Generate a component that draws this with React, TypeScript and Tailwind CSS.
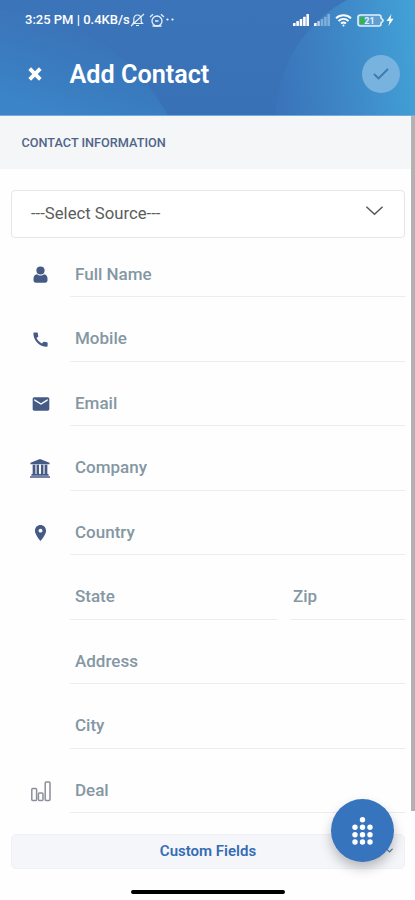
import React from 'react';
import { ChevronDown } from 'lucide-react';
import { MdCall, MdEmail, MdLocationOn } from 'react-icons/md';

interface Field {
    label: string;
    icon?: React.ReactNode;
    second?: string;
}

const FIELDS: Field[] = [
    { label: 'Full Name', icon: <PersonIcon /> },
    { label: 'Mobile', icon: <MdCall size={19} /> },
    { label: 'Email', icon: <MdEmail size={20} /> },
    { label: 'Company', icon: <BankIcon /> },
    { label: 'Country', icon: <MdLocationOn size={19} className="-translate-y-[0.5px]" /> },
    { label: 'State', second: 'Zip' },
    { label: 'Address' },
    { label: 'City' },
    { label: 'Deal', icon: <BarsIcon /> },
];

const DOTS = [
    [11, 3.8],
    [3.5, 11.3], [11, 11.3], [18.5, 11.3],
    [3.5, 18.7], [11, 18.7], [18.5, 18.7],
    [3.5, 26], [11, 26], [18.5, 26],
];

function PersonIcon() {
    return (
        <svg width="15" height="18" viewBox="0 0 15 18" fill="currentColor">
            <path d="M4 8.2C1.6 8.6.5 10.3.5 12.6v1.7c0 1.6.9 2.5 2.5 2.5h9c1.6 0 2.5-.9 2.5-2.5v-1.7c0-2.3-1.1-4-3.5-4.4-.9.9-2 1.4-3.5 1.4S4.9 9.1 4 8.2z" />
            <circle cx="7.5" cy="4.5" r="4.1" />
        </svg>
    );
}

function BankIcon() {
    return (
        <svg className="-translate-x-[0.5px] -translate-y-[0.5px]" width="21" height="20" viewBox="0 0 22 20" fill="currentColor">
            <path d="M11 0 21 4v1.6H1V4zM3.3 6h2.9v9.8H3.3zM7.4 6H10v9.8H7.400zM12 6h2.600v9.800H12zM15.800 6h2.900v9.800h-2.900zM2 15.800h18v1.700H2zM.5 18.200h21v1.600H.5z" />
        </svg>
    );
}

function BarsIcon() {
    return (
        <svg width="20" height="21" viewBox="0 0 20 21" fill="none" stroke="#8a8f9b" strokeWidth="1.5">
            <rect x=".8" y="7.6" width="4.8" height="12" rx="1" />
            <rect x="7.4" y="12" width="4.6" height="7.6" rx="1" />
            <rect x="14.2" y="1" width="4.8" height="18.6" rx="1" />
        </svg>
    );
}

function SignalBars({ faded }: { faded?: boolean }) {
    return (
        <svg width="16" height="12" viewBox="0 0 16 12" fill="#fff">
            <rect x="0" y="9" width="2.6" height="3" rx=".5" />
            <rect x="3.3" y="7" width="2.6" height="5" rx=".5" opacity={faded ? 0.6 : 1} />
            <rect x="6.7" y="5" width="2.6" height="7" rx=".5" opacity={faded ? 0.35 : 1} />
            <rect x="10.1" y="2.7" width="2.6" height="9.3" rx=".5" opacity={faded ? 0.35 : 1} />
            <rect x="13.4" y="0" width="2.6" height="12" rx=".5" opacity={faded ? 0.35 : 1} />
        </svg>
    );
}

function HeaderBackdrop() {
    return (
        <svg className="absolute inset-0" width="415" height="116" viewBox="0 0 415 116">
            <defs>
                <linearGradient id="base" x1="0" y1="0" x2="0" y2="1">
                    <stop offset="0" stopColor="#3c74b9" />
                    <stop offset="1" stopColor="#3871b6" />
                </linearGradient>
                <linearGradient id="left" x1="95" y1="28" x2="65" y2="116" gradientUnits="userSpaceOnUse">
                    <stop offset="0" stopColor="#3b80c4" stopOpacity="0" />
                    <stop offset="1" stopColor="#3b84c7" />
                </linearGradient>
                <linearGradient id="right" x1="278" y1="80" x2="415" y2="65" gradientUnits="userSpaceOnUse">
                    <stop offset="0" stopColor="#3a74ba" />
                    <stop offset=".6" stopColor="#3f8cca" />
                    <stop offset="1" stopColor="#42a0d6" />
                </linearGradient>
            </defs>
            <rect width="415" height="116" fill="url(#base)" />
            <path d="M0 10C75 18 136 54 168 116H0z" fill="url(#left)" />
            <path d="M347 0C306 22 276 66 276 116h139V0z" fill="url(#right)" />
            <path d="M0 115.500h415" stroke="#74abd9" />
        </svg>
    );
}

function StatusBar() {
    return (
        <div className="flex h-[40px] items-center pl-[25px] pr-[21px]">
            <span className="w-[103px] whitespace-nowrap text-[13px] font-medium">3:25 PM | 0.4KB/s</span>
            <svg className="ml-[2px]" width="15" height="14" viewBox="0 0 15 14" fill="none" stroke="#e6f0fa" strokeWidth="1.2">
                <path d="M3 10.5h9.5L11.2 9V5.8c0-2.2-1.5-3.8-3.7-3.8S3.8 3.6 3.8 5.8V9zM6 12.5h3M1 13 14 1" />
            </svg>
            <svg className="ml-[4px]" width="16" height="15" viewBox="0 0 16 15" fill="none" stroke="#e6f0fa" strokeWidth="1.3">
                <circle cx="8" cy="8" r="5" />
                <path d="M1 4 4 1.3M12 1.3 15 4M6 8h3.5M3.5 13h9" />
            </svg>
            <svg className="-translate-y-[1px]" width="11" height="4" viewBox="0 0 11 4" fill="#fff">
                <circle cx="2.5" cy="2.5" r="1.1" />
                <circle cx="7.5" cy="2.5" r="1.1" />
            </svg>
            <div className="ml-auto flex items-center">
                <SignalBars />
                <div className="ml-[5px] flex"><SignalBars faded /></div>
                <svg className="ml-[5px]" width="17" height="13" viewBox="0 0 17 13" fill="none" stroke="#fff" strokeWidth="1.9">
                    <path d="M1 4.3c4.3-4 10.7-4 15 0M3.5 7c2.9-2.6 7.1-2.6 10 0M6 9.5c1.5-1.3 3.5-1.3 5 0" />
                    <circle cx="8.5" cy="11.6" r="1" fill="#fff" stroke="none" />
                </svg>
                <svg className="ml-[5px]" width="28" height="13" viewBox="0 0 28 13">
                    <path d="M3.5 1h18.5q2 0 2 2v1l2 2v1l-2 2v1q0 2-2 2H3.5Q1 12 1 9.5v-6Q1 1 3.5 1z" fill="#5e9ed3" stroke="#e3f2fa" strokeWidth="1.6" />
                    <path d="M3 3h5v7H3z" fill="#35b34c" />
                    <text x="12.5" y="9.8" textAnchor="middle" fill="#e3f2fa" fontSize="9" fontWeight="700" fontFamily="Roboto, sans-serif">21</text>
                </svg>
                <svg className="ml-[1px]" width="8" height="12" viewBox="0 0 8 12" fill="#fff">
                    <path d="M5.5 0 .5 7H3.5L2.5 12 7.5 4.8H4.5z" />
                </svg>
            </div>
        </div>
    );
}

export default function App() {
    return (
        <div className="relative flex h-[900px] w-[415px] flex-col overflow-hidden bg-[#fefefe] font-[Roboto,sans-serif]">
            {/* Header */}
            <header className="relative h-[116px] shrink-0 text-white">
                <HeaderBackdrop />
                <div className="relative">
                    <StatusBar />
                    <div className="flex h-[68px] items-center pl-[28px] pr-[15px]">
                        <svg width="14" height="14" viewBox="0 0 14 14" stroke="#fff" strokeWidth="3.8">
                            <path d="M1.7 1.7 12.3 12.3M12.3 1.7 1.7 12.3" />
                        </svg>
                        <h1 className="ml-[27.5px] mt-[2px] text-[25.2px] font-semibold leading-none">Add Contact</h1>
                        <button className="ml-auto flex size-[38px] items-center justify-center rounded-full bg-[#78b2df]">
                            <svg width="18" height="14" viewBox="0 0 18 14" fill="none" stroke="#4079b0" strokeWidth="1.9">
                                <path d="M2 7 6.5 11.5 16 2" />
                            </svg>
                        </button>
                    </div>
                </div>
            </header>

            <div className="flex h-[53px] shrink-0 items-center bg-[#f4f6f8] pl-[21.5px]">
                <h2 className="text-[12.7px] font-medium text-[#506588]">CONTACT INFORMATION</h2>
            </div>

            {/* Source select */}
            <div className="ml-[11px] mt-[21px] flex h-[48px] w-[394px] shrink-0 items-center justify-between rounded-[4px] border-[1.5px] border-[#e6e6e6] bg-white pl-[19px] pr-[20px]">
                <span className="text-[16.7px] leading-none text-[#5c5c5c]">---Select Source---</span>
                <svg className="-translate-y-[3px]" width="19" height="12" viewBox="0 0 20 12" fill="none" stroke="#555" strokeWidth="1.5">
                    <path d="M1.5 1.5 10 9.5 18.5 1.5" />
                </svg>
            </div>

            {/* Fields */}
            <div className="mt-[-5.5px] shrink-0">
                {FIELDS.map(field => (
                    <div key={field.label} className="flex h-[64.5px] pr-[10px] text-[17px] font-medium text-[#8497a3]">
                        <div className="mr-[-11px] flex w-[81px] items-center justify-center pt-[21px] text-[#455b86]">
                            {field.icon}
                        </div>
                        <div className="flex flex-1 items-center border-b-[1.5px] border-[#ededf0] pl-[5px] pt-[20px]">
                            {field.label}
                        </div>
                        {field.second && (
                            <div className="ml-[13px] flex w-[115px] items-center border-b-[1.5px] border-[#ededf0] pl-[3px] pt-[20px]">
                                {field.second}
                            </div>
                        )}
                    </div>
                ))}
            </div>

            <button className="ml-[11px] mt-[21px] flex h-[35px] w-[394px] shrink-0 items-center justify-center rounded-[5px] border border-[#eff1f5] bg-[#f4f6fa] text-[15px] font-semibold text-[#346cb5]">
                Custom Fields
            </button>
            <div className="mx-auto mt-[21px] h-[4px] w-[154px] shrink-0 rounded-full bg-black" />

            {/* Scrollbar */}
            <div className="absolute right-0 top-[116px] h-[695px] w-[4px] bg-[#b2b2b2]" />

            {/* Floating action button */}
            <button className="absolute left-[331px] top-[799px] flex size-[63px] items-center justify-center rounded-full bg-[#3674bd] shadow-[0_6px_12px_rgba(0,0,0,0.25)]">
                <svg className="-translate-x-[0.5px]" width="22" height="30" viewBox="0 0 22 30" fill="#fff">
                    {DOTS.map(([x, y]) => <circle key={`${x}-${y}`} cx={x} cy={y} r="2.7" />)}
                </svg>
            </button>
            <ChevronDown size={11} strokeWidth={2.5} className="absolute left-[384px] top-[845px] text-[#3e699c]" />
        </div>
    );
}
